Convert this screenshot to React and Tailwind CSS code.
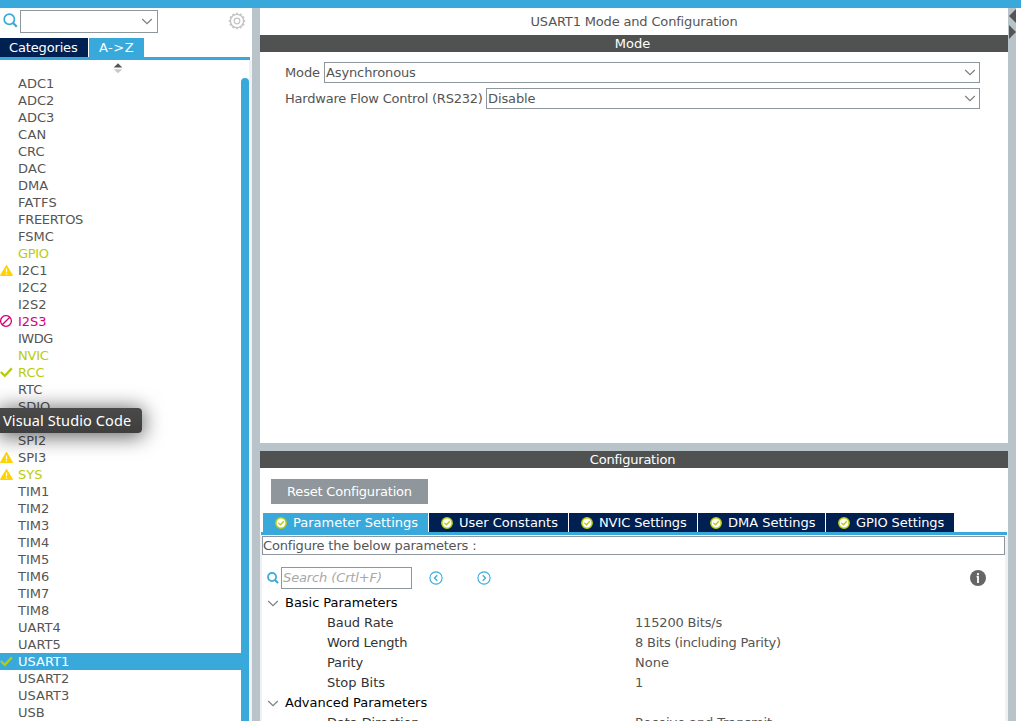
import React from "react";

const peripherals = [
  ["ADC1"], ["ADC2"], ["ADC3"], ["CAN"], ["CRC"], ["DAC"], ["DMA"], ["FATFS"],
  ["FREERTOS"], ["FSMC"], ["GPIO", "on"], ["I2C1", "", "warn"], ["I2C2"], ["I2S2"],
  ["I2S3", "off", "ban"], ["IWDG"], ["NVIC", "on"], ["RCC", "on", "check"], ["RTC"],
  ["SDIO"], ["SPI1"], ["SPI2"], ["SPI3", "", "warn"], ["SYS", "on", "warn"],
  ["TIM1"], ["TIM2"], ["TIM3"], ["TIM4"], ["TIM5"], ["TIM6"], ["TIM7"], ["TIM8"],
  ["UART4"], ["UART5"], ["USART1", "selected", "check"], ["USART2"], ["USART3"], ["USB"],
];

const rowTone = {
  on: "text-[#b9cc0a]",
  off: "text-[#d4007a]",
  selected: "bg-[#39a9dc] text-white",
};

const nameSpacing = {
  FREERTOS: "tracking-[-0.3px]",
  FATFS: "tracking-[0.3px]",
  GPIO: "tracking-[-0.3px]",
  IWDG: "tracking-[-0.5px]",
  CAN: "tracking-[0.3px]",
  DAC: "tracking-[0.3px]",
  NVIC: "tracking-[-0.2px]",
};

const tabs = [
  ["Parameter Settings", "w-[165px] bg-[#39a9dc]"],
  ["User Constants", "w-[139px] bg-[#002052]"],
  ["NVIC Settings", "w-[128px] bg-[#002052] tracking-[-0.1px]"],
  ["DMA Settings", "w-[127px] bg-[#002052]"],
  ["GPIO Settings", "w-[128px] bg-[#002052] tracking-[-0.1px]"],
];

const basicRows = [
  ["Baud Rate", "115200 Bits/s", "tracking-[-0.1px]", "tracking-[-0.17px]"],
  ["Word Length", "8 Bits (including Parity)", "tracking-[-0.2px]", "tracking-[-0.22px]"],
  ["Parity", "None", "tracking-[-0.15px]", ""],
  ["Stop Bits", "1", "", ""],
];

function Magnifier({ className, heavy }) {
  return (
    <svg className={className} viewBox="0 0 15 15" fill="none" stroke="#39a9dc">
      <circle cx="6.3" cy="6.3" r="5.1" strokeWidth={heavy ? 2.1 : 1.7} />
      <path d="M10 10 L13.8 13.8" strokeWidth={heavy ? 2.6 : 2.2} />
    </svg>
  );
}

function Chevron({ className }) {
  return (
    <svg className={className} width="12" height="7" viewBox="0 0 12 7" fill="none" stroke="#7c7f82" strokeWidth="1.2">
      <path d="M1.2 1 L6 5.6 L10.8 1" />
    </svg>
  );
}

function Gear() {
  const teeth = Array.from({ length: 12 }, (_, i) => i * 30);
  return (
    <svg className="ml-[70px] mt-[2px] size-[18px] shrink-0" viewBox="0 0 18 18" fill="none" stroke="#c6c6c6">
      <circle cx="9" cy="9" r="6.6" strokeWidth="1.4" />
      {teeth.map((a) => (
        <path key={a} d="M9 2.6 V0.8" strokeWidth="2.2" transform={`rotate(${a} 9 9)`} />
      ))}
      <circle cx="9" cy="9" r="2.8" strokeWidth="1.3" />
    </svg>
  );
}

function StatusIcon({ kind }) {
  if (kind === "warn")
    return (
      <svg className="size-[13px]" viewBox="0 0 13 13">
        <path d="M6.5 1.8 L12.2 11.3 H0.8 Z" fill="#ffd200" stroke="#ffd200" strokeWidth="1.4" strokeLinejoin="round" />
        <path d="M6.5 4.5 V8.2 M6.5 9.2 V10.6" stroke="#fff" strokeWidth="1.3" />
      </svg>
    );
  if (kind === "ban")
    return (
      <svg className="size-[13px]" viewBox="0 0 13 13" fill="none" stroke="#d4007a" strokeWidth="1.3">
        <circle cx="6" cy="6" r="5.4" />
        <path d="M2.2 9.8 L9.8 2.2" />
      </svg>
    );
  if (kind === "check")
    return (
      <svg className="size-[13px]" viewBox="0 0 13 13" fill="none" stroke="#b9cc0a" strokeWidth="2.3">
        <path d="M0.8 6 L4.8 9.8 L11.8 2.4" />
      </svg>
    );
  return null;
}

function TabCheck() {
  return (
    <svg className="size-[12px] shrink-0" viewBox="0 0 12 12">
      <circle cx="6" cy="6" r="5.2" fill="#fff" stroke="#b9cc0a" strokeWidth="1.5" />
      <path d="M3.4 5.9 L5.4 7.8 L8.8 4.3" fill="none" stroke="#b9cc0a" strokeWidth="1.3" />
    </svg>
  );
}

function CircleArrow({ d, className }) {
  return (
    <svg className={className} width="14" height="14" viewBox="0 0 14 14" fill="none" stroke="#39a9dc">
      <circle cx="7" cy="7" r="6.1" strokeWidth="1.1" />
      <path d={d} strokeWidth="1.3" />
    </svg>
  );
}

function Sidebar() {
  return (
    <aside className="flex w-[252px] shrink-0 flex-col">
      <div className="flex h-[30px] pt-[2px]">
        <Magnifier className="ml-[3px] mt-[3px] size-[15px] shrink-0" />
        <div className="ml-[2px] flex h-[23px] w-[138px] items-center justify-end border border-[#8e979e] pr-[4px]">
          <Chevron />
        </div>
        <Gear />
      </div>
      <div className="flex h-[19px] gap-px leading-[19px] text-white">
        <div className="w-[88px] bg-[#002052] pl-[9px] tracking-[-0.15px]">Categories</div>
        <div className="w-[55px] bg-[#39a9dc] pl-[10px] tracking-[0.5px]">A-&gt;Z</div>
      </div>
      <div className="h-[3px] w-[250px] shrink-0 bg-[#39a9dc]" />
      <div className="flex min-h-0 flex-1">
        <div className="w-[241px]">
          <div className="flex h-[15px] justify-center pr-[5px] pt-[3px]">
            <svg width="10" height="11" viewBox="0 0 10 11">
              <path d="M5 0.3 L9.3 4.6 H0.7 Z" fill="#555" />
              <path d="M5 10.3 L9.3 6.2 H0.7 Z" fill="#c8c8c8" />
            </svg>
          </div>
          {peripherals.map(([name, tone, icon]) => (
            <div key={name} className={`flex h-[17px] items-center leading-[17px] ${rowTone[tone] || ""}`}>
              <div className="w-[18px]"><StatusIcon kind={icon} /></div>
              <span className={nameSpacing[name]}>{name}</span>
            </div>
          ))}
        </div>
        <div className="w-[8px] pt-[18px]">
          <div className="h-full rounded-t-[4px] bg-[#39a9dc]" />
        </div>
        <div className="w-[3px] bg-[#f0f1f4]" />
      </div>
    </aside>
  );
}

function Select({ value }) {
  return (
    <div className="flex h-[21px] flex-1 items-center justify-between border border-[#8e979e] pl-[1px] pr-[3px]">
      <span className="tracking-[-0.12px]">{value}</span>
      <Chevron />
    </div>
  );
}

function ModePanel() {
  return (
    <section className="h-[435px] shrink-0 bg-white">
      <div className="h-[27px] text-center leading-[27px] tracking-[-0.16px]">USART1 Mode and Configuration</div>
      <div className="h-[17px] bg-[#4f5250] pr-[3px] text-center leading-[17px] text-white">Mode</div>
      <div className="flex flex-col gap-[5px] pl-[25px] pr-[28px] pt-[10px]">
        <div className="flex items-center">
          <span className="w-[39px] tracking-[-0.1px]">Mode</span>
          <Select value="Asynchronous" />
        </div>
        <div className="flex items-center">
          <span className="w-[201px] whitespace-nowrap tracking-[-0.22px]">Hardware Flow Control (RS232)</span>
          <Select value="Disable" />
        </div>
      </div>
    </section>
  );
}

function Group({ title }) {
  return (
    <div className="flex h-[20px] items-center leading-[20px] text-black">
      <Chevron className="ml-[5px]" />
      <span className="ml-[6px] tracking-[-0.03px]">{title}</span>
    </div>
  );
}

function Param({ name, value, nameClass = "", valueClass = "" }) {
  return (
    <div className="flex h-[20px] items-center pl-[65px] leading-[20px]">
      <span className={`w-[308px] text-[#333] ${nameClass}`}>{name}</span>
      <span className={valueClass}>{value}</span>
    </div>
  );
}

function ConfigPanel() {
  return (
    <section className="min-h-0 flex-1 overflow-hidden bg-white">
      <div className="h-[17px] bg-[#4f5250] pr-[3px] text-center leading-[17px] tracking-[-0.22px] text-white">Configuration</div>
      <div className="ml-[11px] mt-[11px] h-[25px] w-[157px] bg-[#8f979c] text-center leading-[25px] tracking-[-0.2px] text-white">Reset Configuration</div>
      <div className="ml-[3px] mt-[9px] flex h-[19px] gap-px leading-[19px] text-white">
        {tabs.map(([label, look]) => (
          <div key={label} className={`flex items-center gap-[6px] whitespace-nowrap pl-[12px] ${look}`}>
            <TabCheck />
            <span>{label}</span>
          </div>
        ))}
      </div>
      <div className="ml-[1px] h-[3px] w-[746px] bg-[#39a9dc]" />
      <div className="h-[186px] border-l-2 border-r-3 border-[#f0f1f4] pt-[1px]">
        <div className="h-[19px] border border-[#8e979e] leading-[17px] tracking-[-0.18px]">Configure the below parameters :</div>
        <div className="flex h-[38px] items-start pt-[12px]">
          <Magnifier heavy className="ml-[5px] mt-[5px] size-[12px] shrink-0" />
          <div className="ml-[2px] h-[22px] w-[131px] border border-[#8e979e] pl-[1px] leading-[20px] tracking-[-0.12px] text-[#a8a8a8] italic">Search (Crtl+F)</div>
          <CircleArrow className="ml-[17px] mt-[4px]" d="M8.3 4.2 L5.5 7 L8.3 9.8" />
          <CircleArrow className="ml-[34px] mt-[4px]" d="M5.7 4.2 L8.5 7 L5.7 9.8" />
          <svg className="ml-auto mr-[19px] mt-[3px]" width="16" height="16" viewBox="0 0 16 16">
            <circle cx="8" cy="8" r="8" fill="#666" />
            <path d="M8 3 V5 M6.6 6.6 H8 V13" fill="none" stroke="#fff" strokeWidth="1.8" />
          </svg>
        </div>
        <Group title="Basic Parameters" />
        {basicRows.map(([name, value, nameClass, valueClass]) => (
          <Param key={name} name={name} value={value} nameClass={nameClass} valueClass={valueClass} />
        ))}
        <Group title="Advanced Parameters" />
        <Param name="Data Direction" value="Receive and Transmit" nameClass="tracking-[-0.1px]" valueClass="tracking-[-0.12px]" />
      </div>
    </section>
  );
}

export default function App() {
  return (
    <div className="relative flex h-[721px] w-[1021px] flex-col overflow-hidden bg-white font-['DejaVu_Sans',sans-serif] text-[13px] text-[#555]">
      <div className="h-[8px] shrink-0 bg-[#39a9dc]" />
      <div className="flex min-h-0 flex-1">
        <Sidebar />
        <div className="w-[8px] shrink-0 bg-[#b8c4ca]" />
        <main className="flex w-[748px] shrink-0 flex-col gap-[8px] bg-[#b8c4ca]">
          <ModePanel />
          <ConfigPanel />
        </main>
        <div className="w-[8px] shrink-0 bg-[#b8c4ca]">
          <svg width="8" height="34" viewBox="0 0 8 34" fill="#555">
            <path d="M8 1 V15 L1 8 Z" />
            <path d="M1 17 V31 L8 24 Z" />
          </svg>
        </div>
      </div>
      <div className="absolute left-0 top-[408px] h-[25px] w-[142px] rounded-r-[4px] bg-linear-to-b from-[#4a4a4a] to-[#3e3e3e] pl-[3px] font-['Noto_Sans',sans-serif] text-[14.5px] leading-[25px] tracking-[0.1px] whitespace-nowrap text-white shadow-[0_2px_20px_2px_rgba(0,0,0,0.6)]">
        Visual Studio Code
      </div>
    </div>
  );
}
